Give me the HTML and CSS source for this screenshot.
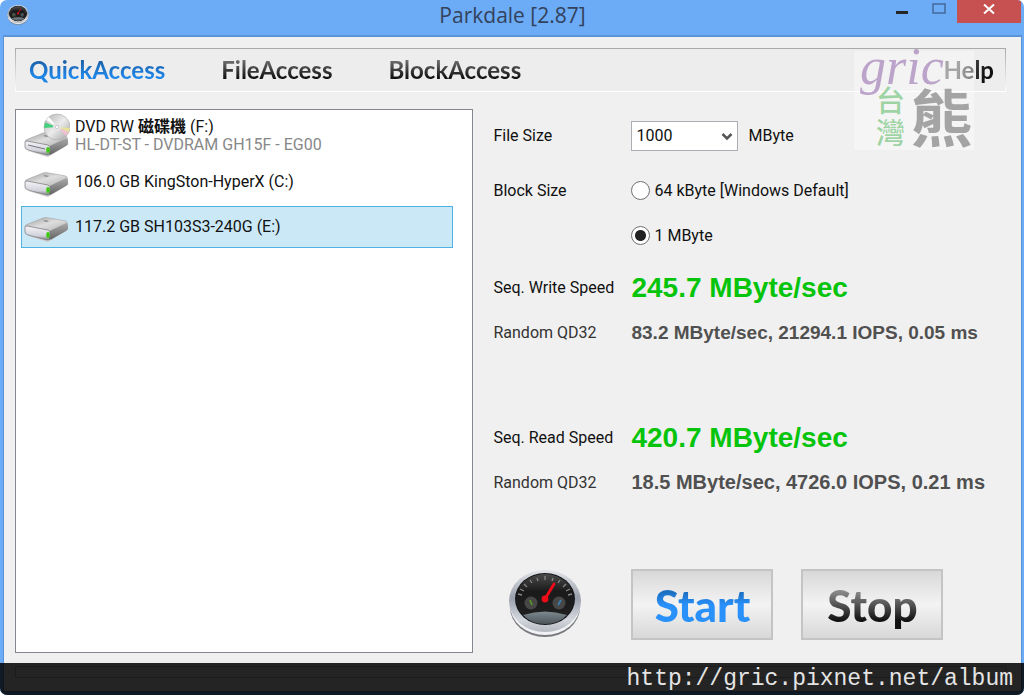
FILE: index.html
```html
<!DOCTYPE html>
<html lang="en">
  <head>
    <meta charset="UTF-8" />
    <meta name="viewport" content="width=device-width, initial-scale=1.0" />
    <title>Parkdale [2.87]</title>
    <link rel="stylesheet" href="styles.css">
  </head>
  <body>
    <!-- shared drawings -->
    <svg class="defs" width="0" height="0" aria-hidden="true">
      <defs>
        <linearGradient id="rim" x1="0" y1="0" x2="0" y2="1">
          <stop offset="0" stop-color="#e4e6ea"/>
          <stop offset="0.45" stop-color="#9aa0ac"/>
          <stop offset="0.8" stop-color="#d4d7dd"/>
          <stop offset="1" stop-color="#b4b8c0"/>
        </linearGradient>
        <linearGradient id="face" x1="0" y1="0" x2="0" y2="1">
          <stop offset="0" stop-color="#4a4a4a"/>
          <stop offset="0.35" stop-color="#1a1a1a"/>
          <stop offset="1" stop-color="#222"/>
        </linearGradient>
        <linearGradient id="pool" x1="0" y1="0" x2="0" y2="1">
          <stop offset="0" stop-color="#7c8990"/>
          <stop offset="1" stop-color="#4d5559"/>
        </linearGradient>
        <linearGradient id="top" x1="0" y1="0" x2="1" y2="1">
          <stop offset="0" stop-color="#9c9c9c"/>
          <stop offset="0.5" stop-color="#dedede"/>
          <stop offset="1" stop-color="#b2b2b2"/>
        </linearGradient>
        <linearGradient id="side" x1="0" y1="0" x2="0" y2="1">
          <stop offset="0" stop-color="#aaa"/>
          <stop offset="1" stop-color="#666"/>
        </linearGradient>
        <linearGradient id="front" x1="0" y1="0" x2="0" y2="1">
          <stop offset="0" stop-color="#f4f4f8"/>
          <stop offset="0.7" stop-color="#d2d2dc"/>
          <stop offset="1" stop-color="#77777c"/>
        </linearGradient>
        <linearGradient id="disc" x1="0" y1="0" x2="1" y2="1">
          <stop offset="0" stop-color="#b0b0b0"/>
          <stop offset="0.5" stop-color="#ececec"/>
          <stop offset="1" stop-color="#a0a0a0"/>
        </linearGradient>
      </defs>
      <symbol id="gauge" viewBox="0 0 74 70">
        <ellipse cx="37" cy="38" rx="35" ry="30" fill="#77797d"/>
        <ellipse cx="37" cy="36" rx="35" ry="30" fill="#f1f2f4"/>
        <ellipse cx="37" cy="32" rx="36" ry="31" fill="url(#rim)"/>
        <ellipse cx="37" cy="30" rx="30" ry="26" fill="#15161a"/>
        <ellipse cx="37" cy="30" rx="29" ry="25" fill="url(#face)"/>
        <path d="M15 46Q37 39 59 46Q51 55 37 55T15 46Z" fill="url(#pool)"/>
        <g stroke="#888" stroke-width="1.3">
          <path d="M10 25l4 1M12 20l4 2M16 15l3 3M22 11l2 3M29 9l1 3M37 7v4M45 9l-1 3M52 11l-2 3M58 15l-3 3M62 20l-4 2M64 25l-4 1"/>
        </g>
        <circle cx="23" cy="34" r="6.5" fill="#474747"/>
        <circle cx="51" cy="34" r="6.5" fill="#474747"/>
        <path d="M22 31l2 5" stroke="#5b9a1c" stroke-width="1.6"/>
        <path d="M53 31l-3 5" stroke="#3b82b5" stroke-width="1.6"/>
        <path d="M37 30L46 15" stroke="#ee0c18" stroke-width="2.8" stroke-linecap="round"/>
        <circle cx="37" cy="30" r="3.4" fill="#ee0c18"/>
      </symbol>
      <symbol id="drive" viewBox="0 0 46 26">
        <path d="M4 19L24 25L45 12L43 11L22 20Z" fill="#ccc"/>
        <path d="M1 10Q1 8 4 7L19 1Q22 0 25 1L42 4Q44 5 43 7L26 14Z" fill="url(#top)" stroke="#999" stroke-width="0.5"/>
        <path d="M1 10Q1 9 3 9L24 13Q26 14 26 16V22Q25 23 23 23L4 18Q1 17 1 15Z" fill="url(#front)" stroke="#777" stroke-width="0.7"/>
        <path d="M26 14L42 6Q44 6 44 8V11Q44 13 42 14L28 22Q26 23 25 22Z" fill="url(#side)"/>
        <path d="M21 3l4 1-2 1-4-1z" fill="#8c8c8c"/>
        <ellipse cx="24" cy="18" rx="1.8" ry="3" fill="#3fcb14"/>
      </symbol>
      <symbol id="dvd" viewBox="0 0 46 45">
        <use href="#drive" x="0" y="19" width="46" height="26"/>
        <circle cx="33" cy="14" r="13" fill="url(#disc)" stroke="#aaa" stroke-width="0.6"/>
        <path d="M33 14L21 9.500L20 15Z" fill="#45cf7c"/>
        <path d="M33 14L25 4L22 7Z" fill="#fff"/>
        <path d="M33 14L45 19L42 23Z" fill="#ecc2d2"/>
        <path d="M33 14L46 15L45 19Z" fill="#e8e19a"/>
        <circle cx="33" cy="14" r="4" fill="#e4e4e4"/>
        <circle cx="33" cy="14" r="1.6" fill="#fff" stroke="#aaa" stroke-width="0.5"/>
        <path d="M4 32L21 36" stroke="#777" stroke-width="1"/>
      </symbol>
    </svg>

    <div class="window">
      <header class="titlebar">
        <svg class="app-icon" aria-hidden="true"><use href="#gauge"/></svg>
        <h1 class="title">Parkdale [2.87]</h1>
        <div class="window-buttons">
          <button class="win-btn" type="button" aria-label="Minimize">
            <svg width="12" height="20"><path d="M0 12.500h12" stroke="#262626" stroke-width="3"/></svg>
          </button>
          <button class="win-btn" type="button" aria-label="Maximize">
            <svg width="14" height="20"><path d="M1 4h12v9H1z" fill="none" stroke="#46699a" stroke-width="1.500"/></svg>
          </button>
          <button class="win-btn close" type="button" aria-label="Close">
            <svg width="12" height="20"><path d="M1 4.500l10 9M11 4.500l-10 9" stroke="#fff" stroke-width="2"/></svg>
          </button>
        </div>
      </header>

      <main class="client">
        <nav class="menu">
          <a class="active" href="#">QuickAccess</a>
          <a href="#">FileAccess</a>
          <a href="#">BlockAccess</a>
          <a class="help" href="#">Help</a>
        </nav>

        <div class="content">
          <ul class="drives" role="listbox" aria-label="Drives">
            <li class="drive tall" role="option" aria-selected="false">
              <svg class="dvd-icon" aria-hidden="true"><use href="#dvd"/></svg>
              <div>DVD RW <b>磁碟機</b> (F:)<br><span class="model">HL-DT-ST - DVDRAM GH15F - EG00</span></div>
            </li>
            <li class="drive" role="option" aria-selected="false">
              <svg class="hdd-icon" aria-hidden="true"><use href="#drive"/></svg>
              <div>106.0 GB KingSton-HyperX (C:)</div>
            </li>
            <li class="drive selected" role="option" aria-selected="true">
              <svg class="hdd-icon" aria-hidden="true"><use href="#drive"/></svg>
              <div>117.2 GB SH103S3-240G (E:)</div>
            </li>
          </ul>

          <form class="panel">
            <div class="group">
              <label for="file-size">File Size</label>
              <div class="field">
                <span class="select-wrap">
                  <select id="file-size">
                    <option>1000</option>
                  </select>
                  <svg class="chevron" width="12" height="8" aria-hidden="true"><path d="M1.500 1L6 5.500L10.500 1" fill="none" stroke="#555" stroke-width="2.500"/></svg>
                </span>
                <span>MByte</span>
              </div>
            </div>

            <div class="group block-size" role="radiogroup" aria-labelledby="block-label">
              <span id="block-label">Block Size</span>
              <label class="choice"><input type="radio" name="block">64 kByte [Windows Default]</label>
              <label class="choice second"><input type="radio" name="block" checked>1 MByte</label>
            </div>

            <div class="group write">
              <span>Seq. Write Speed</span>
              <output class="speed">245.7 MByte/sec</output>
              <span class="random">Random QD32</span>
              <output class="detail">83.2 MByte/sec, 21294.1 IOPS, 0.05 ms</output>
            </div>

            <div class="group read">
              <span>Seq. Read Speed</span>
              <output class="speed">420.7 MByte/sec</output>
              <span class="random">Random QD32</span>
              <output class="detail large">18.5 MByte/sec, 4726.0 IOPS, 0.21 ms</output>
            </div>

            <div class="actions">
              <svg class="gauge" aria-hidden="true"><use href="#gauge"/></svg>
              <div class="buttons">
                <button class="action start" type="button"><span>Start</span></button>
                <button class="action stop" type="button"><span>Stop</span></button>
              </div>
            </div>
          </form>
        </div>
        <div class="status"></div>
      </main>

      <div class="watermark">
        <span class="script">gric</span>
        <div class="han">
          <span class="place">台<br>灣</span>
          <span class="bear">熊</span>
        </div>
      </div>
      <footer class="credit">http://gric.pixnet.net/album</footer>
    </div>
  </body>
</html>
```

FILE: styles.css
```css
* {
  margin: 0;
  padding: 0;
  box-sizing: border-box;
}
body {
  background-color: #fff;
  color: #111;
  font-family: Roboto, "Noto Sans CJK TC", sans-serif;
  font-size: 16px;
}
.defs {
  position: absolute;
}
.window {
  position: relative;
  display: flex;
  flex-direction: column;
  min-height: 100vh;
  padding: 0 3px 4px 4px;
  background: #6cabf5;
  border-radius: 7px;
  overflow: hidden;
}

/* title bar */
.titlebar {
  display: grid;
  grid-template-columns: 1fr auto 1fr;
  height: 36px;
}
.app-icon {
  width: 22px;
  height: 22px;
  margin: 4px 0 0 3px;
}
.title {
  font-family: "Open Sans", sans-serif;
  font-size: 21px;
  font-weight: 400;
  line-height: 30px;
  color: #33425c;
}
.window-buttons {
  display: flex;
  justify-content: flex-end;
}
.win-btn {
  display: flex;
  justify-content: center;
  width: 37px;
  height: 23px;
  border: none;
  background: none;
}
.win-btn.close {
  width: 64px;
  background: #c75050;
}

/* client area */
.client {
  flex: 1;
  display: flex;
  flex-direction: column;
  padding: 11px 15px 13px 11px;
  background: #f0f0f0;
  border-top: 1px solid #5b93d8;
  box-shadow: 0 0 0 1px #5b93d8;
}
.menu {
  display: flex;
  align-items: center;
  gap: 56px;
  height: 44px;
  padding: 0 11px 0 13px;
  background: #ededed;
  border: 1px solid #aaa;
  border-image: linear-gradient(#a8a8a8, #fff) 1;
}
.menu a {
  font-family: Lato, sans-serif;
  font-size: 24px;
  font-weight: 700;
  line-height: 32px;
  text-decoration: none;
  color: transparent;
  background: linear-gradient(#777 15%, #111 75%);
  background-clip: text;
}
.menu a.active {
  background-image: linear-gradient(#1c5fa5 20%, #1f86e8 70%);
}
.menu .help {
  margin-left: auto;
  background-image: linear-gradient(100deg, #777 30%, #111 80%);
}
.content {
  flex: 1;
  display: grid;
  grid-template-columns: 458fr 512fr;
  gap: 20px;
  margin-top: 17px;
}

/* drive list */
.drives {
  display: flex;
  flex-direction: column;
  gap: 3px;
  padding: 3px 19px 3px 5px;
  background: #fff;
  border: 1px solid #828790;
  list-style: none;
}
.drive {
  display: flex;
  align-items: center;
  gap: 5px;
  height: 42px;
  padding: 0 2px;
  border: 1px solid transparent;
  line-height: 18px;
}
.drive.tall {
  height: 45px;
}
.drive.selected {
  background: #cbe8f6;
  border-color: #4fb2e3;
}
.dvd-icon {
  width: 46px;
  height: 45px;
}
.hdd-icon {
  width: 46px;
  height: 26px;
  margin-top: 6px;
}
.model {
  color: #888;
}

/* settings and results */
.group {
  display: grid;
  grid-template-columns: 138px 1fr;
  grid-auto-rows: 45px;
  align-items: center;
  white-space: nowrap;
}
.panel {
  padding-top: 4px;
}
.block-size {
  margin-top: 10px;
}
.write {
  margin-top: 7px;
}
.read {
  margin-top: 60px;
}
.field {
  display: flex;
  align-items: center;
  gap: 10px;
}
.select-wrap {
  position: relative;
}
.select-wrap select {
  display: block;
  width: 107px;
  height: 30px;
  padding: 0 4px;
  appearance: none;
  border: 1px solid #abadb3;
  border-radius: 0;
  background: #fff;
  color: #111;
  font: inherit;
}
.chevron {
  position: absolute;
  right: 5px;
  top: 12px;
  pointer-events: none;
}
.choice {
  display: flex;
  align-items: center;
  gap: 4px;
}
.choice.second {
  grid-column: 2;
}
.choice input {
  width: 19px;
  height: 19px;
  appearance: none;
  border: 1px solid #707070;
  border-radius: 50%;
  background: #fff;
}
.choice input:checked {
  background: radial-gradient(circle, #222 5px, #fff 6px);
}
.speed {
  color: #06c40b;
  font-family: "Liberation Sans", Arial, sans-serif;
  font-size: 28px;
  font-weight: 700;
}
.random {
  color: #333;
}
.detail {
  color: #505050;
  font-family: "Liberation Sans", Arial, sans-serif;
  font-size: 19px;
  font-weight: 700;
}
.detail.large {
  font-size: 20px;
}
.actions {
  display: grid;
  grid-template-columns: 138px 1fr;
  margin-top: 64px;
}
.gauge {
  width: 74px;
  height: 70px;
  margin-left: 15px;
}
.buttons {
  display: flex;
  gap: 28px;
}
.action {
  width: 142px;
  height: 71px;
  border: 2px solid #c4c4c4;
  background: linear-gradient(#d8d8d8, #f3f3f3 50%, #d8d8d8);
  font-family: Lato, sans-serif;
  font-size: 44px;
  font-weight: 900;
}
.action span {
  color: transparent;
  background: linear-gradient(#888 25%, #111 80%);
  background-clip: text;
}
.start span {
  background-image: linear-gradient(#1b6fc0 25%, #2a90fa 50%);
}
.status {
  height: 12px;
  margin-top: 13px;
  border: 1px solid #bbb;
}

/* overlays */
.watermark {
  position: absolute;
  top: 51px;
  right: 50px;
  width: 120px;
  height: 99px;
  background: rgba(255, 255, 255, 0.35);
  pointer-events: none;
}
.script {
  display: block;
  padding-left: 6px;
  color: rgba(150, 110, 175, 0.6);
  font-family: "Liberation Serif", serif;
  font-size: 52px;
  font-style: italic;
  line-height: 32px;
}
.han {
  display: flex;
  align-items: center;
  gap: 6px;
  padding-left: 22px;
  font-family: "Noto Sans CJK TC", sans-serif;
}
.place {
  color: rgba(100, 190, 110, 0.6);
  font-size: 29px;
  font-weight: 500;
  line-height: 32px;
}
.bear {
  color: rgba(110, 110, 110, 0.6);
  font-size: 62px;
  font-weight: 700;
  line-height: 64px;
}
.credit {
  position: absolute;
  left: 0;
  right: 0;
  bottom: 0;
  height: 32px;
  padding-right: 11px;
  background: rgba(0, 0, 0, 0.85);
  color: #e4e4e4;
  font-family: "Liberation Mono", monospace;
  font-size: 23px;
  line-height: 32px;
  text-align: right;
}
```
